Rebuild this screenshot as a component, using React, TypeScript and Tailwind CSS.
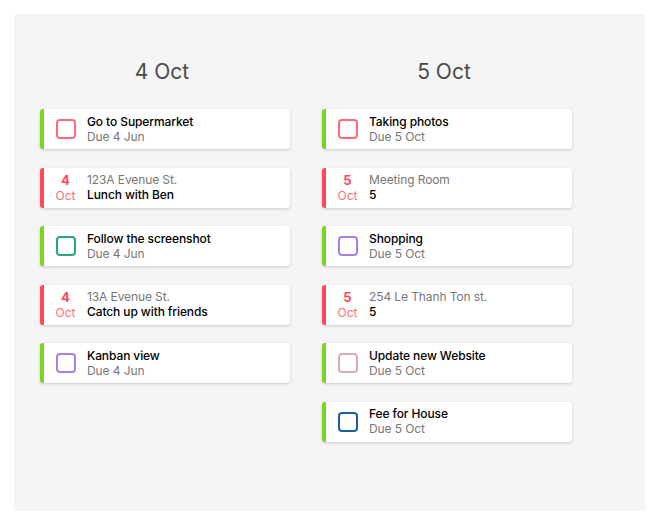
import React from 'react';

type Task =
  | { kind: 'todo'; title: string; due: string; box: string }
  | { kind: 'event'; day: string; place: string; title: string };

const COLUMNS: { date: string; tasks: Task[] }[] = [
  {
    date: '4 Oct',
    tasks: [
      { kind: 'todo', title: 'Go to Supermarket', due: 'Due 4 Jun', box: 'border-[#ff6b78]' },
      { kind: 'event', day: '4', place: '123A Evenue St.', title: 'Lunch with Ben' },
      { kind: 'todo', title: 'Follow the screenshot', due: 'Due 4 Jun', box: 'border-[#2aa876]' },
      { kind: 'event', day: '4', place: '13A Evenue St.', title: 'Catch up with friends' },
      { kind: 'todo', title: 'Kanban view', due: 'Due 4 Jun', box: 'border-[#a77fe6]' },
    ],
  },
  {
    date: '5 Oct',
    tasks: [
      { kind: 'todo', title: 'Taking photos', due: 'Due 5 Oct', box: 'border-[#ff6b78]' },
      { kind: 'event', day: '5', place: 'Meeting Room', title: '5' },
      { kind: 'todo', title: 'Shopping', due: 'Due 5 Oct', box: 'border-[#a77fe6]' },
      { kind: 'event', day: '5', place: '254 Le Thanh Ton st.', title: '5' },
      { kind: 'todo', title: 'Update new Website', due: 'Due 5 Oct', box: 'border-[#d9aab6]' },
      { kind: 'todo', title: 'Fee for House', due: 'Due 5 Oct', box: 'border-[#1c5e9e]' },
    ],
  },
];

function Card({ task }: { task: Task }) {
  const isTodo = task.kind === 'todo';
  return (
    <div
      className={`flex items-center h-[40px] w-[250px] bg-white rounded-[3px] border-l-4 shadow-[0_1px_3px_rgba(0,0,0,0.18)] ${
        isTodo ? 'border-[#7ed321]' : 'border-[#ff4a5a]'
      }`}
    >
      <div className="w-[43px] shrink-0 flex items-center justify-center">
        {isTodo ? (
          <div className={`w-[20px] h-[20px] rounded-[4px] border-2 ${task.box}`} />
        ) : (
          <div className="flex flex-col items-center leading-[15px]">
            <span className="text-[13px] font-bold text-[#ff4a5a]">{task.day}</span>
            <span className="text-[12px] text-[#ff6b78]">Oct</span>
          </div>
        )}
      </div>
      <div className="flex flex-col leading-[15px] -mt-[1px] tracking-[-0.1px]">
        {isTodo ? (
          <>
            <span className="text-[12px] font-medium text-black">{task.title}</span>
            <span className="text-[12px] text-[#777]">{task.due}</span>
          </>
        ) : (
          <>
            <span className="text-[12px] text-[#777]">{task.place}</span>
            <span className="text-[12px] font-medium text-black">{task.title}</span>
          </>
        )}
      </div>
    </div>
  );
}

export default function App() {
  return (
    <div className="w-[661px] h-[528px] bg-white p-[14px] pr-[16px] pb-[17px]" style={{ fontFamily: 'Inter, "Noto Sans", sans-serif' }}>
      <div className="h-full bg-[#f5f5f5] rounded-[3px] pl-[26px] pt-[45px] flex gap-[32px]">
        {COLUMNS.map(col => (
          <div key={col.date} className="w-[250px] flex flex-col">
            <h2 className="text-[21px] text-[#4a4a4a] text-center leading-[26px] mb-[24px] pr-[6px]">{col.date}</h2>
            <div className="flex flex-col gap-[18.5px]">
              {col.tasks.map((t, i) => (
                <Card key={i} task={t} />
              ))}
            </div>
          </div>
        ))}
      </div>
    </div>
  );
}
